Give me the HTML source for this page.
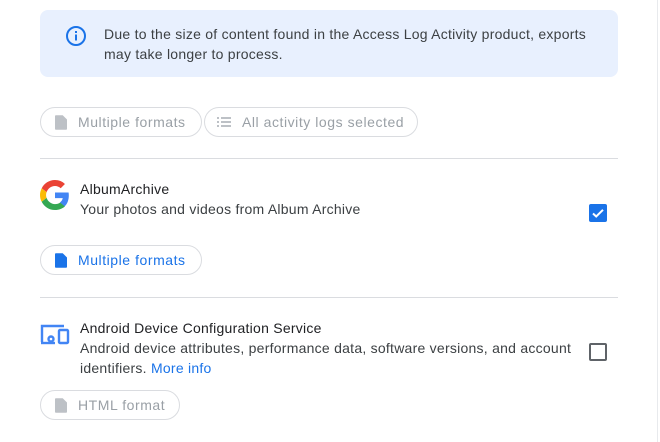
<!DOCTYPE html>
<html><head><style>
body{margin:0;width:660px;height:442px;background:#fff;font-family:"Liberation Sans",sans-serif;position:relative;overflow:hidden;color:#3c4043}
.a{position:absolute}
.info{left:40px;top:10px;width:578px;height:67px;background:#e8f0fe;border-radius:8px}
.t{font-size:14px;line-height:20px;white-space:nowrap;letter-spacing:0.25px}
.chip{position:absolute;height:30px;border:1px solid #dadce0;border-radius:16px;box-sizing:border-box;font-size:14px;letter-spacing:0.55px;line-height:28px;color:#9aa0a6;padding-left:37px;white-space:nowrap}
.hr{position:absolute;left:40px;width:578px;height:1px;background:#dadce0}
.cb{position:absolute;left:589px;width:18px;height:18px;box-sizing:border-box;border-radius:2px}
</style></head><body>
<div class="a" style="left:657px;top:0;width:1px;height:442px;background:#e8eaed"></div>
<div class="a info"></div>
<svg class="a" style="left:65px;top:25px" width="22" height="22" viewBox="0 0 22 22"><circle cx="11" cy="11" r="9" fill="none" stroke="#1a73e8" stroke-width="2"/><rect x="10" y="9.5" width="2" height="6" fill="#1a73e8"/><rect x="10" y="6" width="2" height="2" fill="#1a73e8"/></svg>
<div class="a t" style="left:104px;top:24px">Due to the size of content found in the Access Log Activity product, exports</div>
<div class="a t" style="left:104px;top:44px">may take longer to process.</div>

<div class="chip" style="left:40px;top:107px;width:162px">Multiple formats</div>
<svg class="a" style="left:55px;top:115px" width="12" height="15" viewBox="0 0 14 17"><path d="M1 0h8l5 5v11a1 1 0 0 1-1 1H1a1 1 0 0 1-1-1V1a1 1 0 0 1 1-1z" fill="#bdc1c6"/></svg>
<div class="chip" style="left:204px;top:107px;width:214px">All activity logs selected</div>
<svg class="a" style="left:217px;top:117px" width="14" height="10" viewBox="0 0 14 10" fill="#bdc1c6"><rect x="0" y="0" width="2" height="2"/><rect x="4" y="0" width="10" height="2"/><rect x="0" y="4" width="2" height="2"/><rect x="4" y="4" width="10" height="2"/><rect x="0" y="8" width="2" height="2"/><rect x="4" y="8" width="10" height="2"/></svg>

<div class="hr" style="top:158px"></div>
<svg class="a" style="left:40px;top:180px" width="30" height="30" viewBox="0 0 48 48"><path fill="#EA4335" d="M24 9.5c3.5 0 6.6 1.2 9.1 3.6l6.8-6.8C35.8 2.4 30.3 0 24 0 14.6 0 6.6 5.4 2.7 13.3l7.9 6.1C12.5 13.7 17.8 9.5 24 9.5z"/><path fill="#4285F4" d="M46.1 24.5c0-1.6-.1-3.1-.4-4.5H24v9h12.4c-.5 2.9-2.2 5.4-4.7 7.1l7.7 6c4.5-4.2 6.7-10.3 6.7-17.6z"/><path fill="#FBBC05" d="M10.5 28.6c-.5-1.4-.8-3-.8-4.6s.3-3.2.8-4.6l-7.9-6.1C1 16.6 0 20.2 0 24s.9 7.4 2.6 10.7l7.9-6.1z"/><path fill="#34A853" d="M24 48c6.5 0 11.9-2.1 15.9-5.8l-7.7-6c-2.2 1.5-5 2.300-8.2 2.3-6.2 0-11.5-4.2-13.4-9.9l-7.9 6.1C6.6 42.6 14.6 48 24 48z"/></svg>
<div class="a t" style="left:80px;top:179px;color:#202124">AlbumArchive</div>
<div class="a t" style="left:80px;top:199px">Your photos and videos from Album Archive</div>
<div class="cb" style="top:204px;background:#1a73e8"></div>
<svg class="a" style="left:589px;top:204px" width="18" height="18" viewBox="0 0 18 18"><path d="M4 9.5l3.2 3L14 5.8" fill="none" stroke="#fff" stroke-width="2"/></svg>
<div class="chip" style="left:40px;top:245px;width:162px;color:#1a73e8">Multiple formats</div>
<svg class="a" style="left:55px;top:253px" width="12" height="15" viewBox="0 0 14 17"><path d="M1 0h8l5 5v11a1 1 0 0 1-1 1H1a1 1 0 0 1-1-1V1a1 1 0 0 1 1-1z" fill="#1a73e8"/></svg>

<div class="hr" style="top:297px"></div>
<svg class="a" style="left:40px;top:322px" width="30" height="24" viewBox="0 0 30 24" fill="none" stroke="#4285f4" stroke-width="2.4"><path d="M2 20V4h22"/><path d="M1 21h14"/><rect x="19" y="8" width="9" height="13" rx="1"/><circle cx="11" cy="17" r="2.5"/></svg>
<div class="a t" style="left:80px;top:318px;color:#202124">Android Device Configuration Service</div>
<div class="a t" style="left:80px;top:338px">Android device attributes, performance data, software versions, and account</div>
<div class="a t" style="left:80px;top:358px">identifiers. <span style="color:#1a73e8">More info</span></div>
<div class="cb" style="top:343px;border:2px solid #5f6368"></div>
<div class="chip" style="left:40px;top:390px;width:140px">HTML format</div>
<svg class="a" style="left:55px;top:398px" width="12" height="15" viewBox="0 0 14 17"><path d="M1 0h8l5 5v11a1 1 0 0 1-1 1H1a1 1 0 0 1-1-1V1a1 1 0 0 1 1-1z" fill="#bdc1c6"/></svg>
</body></html>
